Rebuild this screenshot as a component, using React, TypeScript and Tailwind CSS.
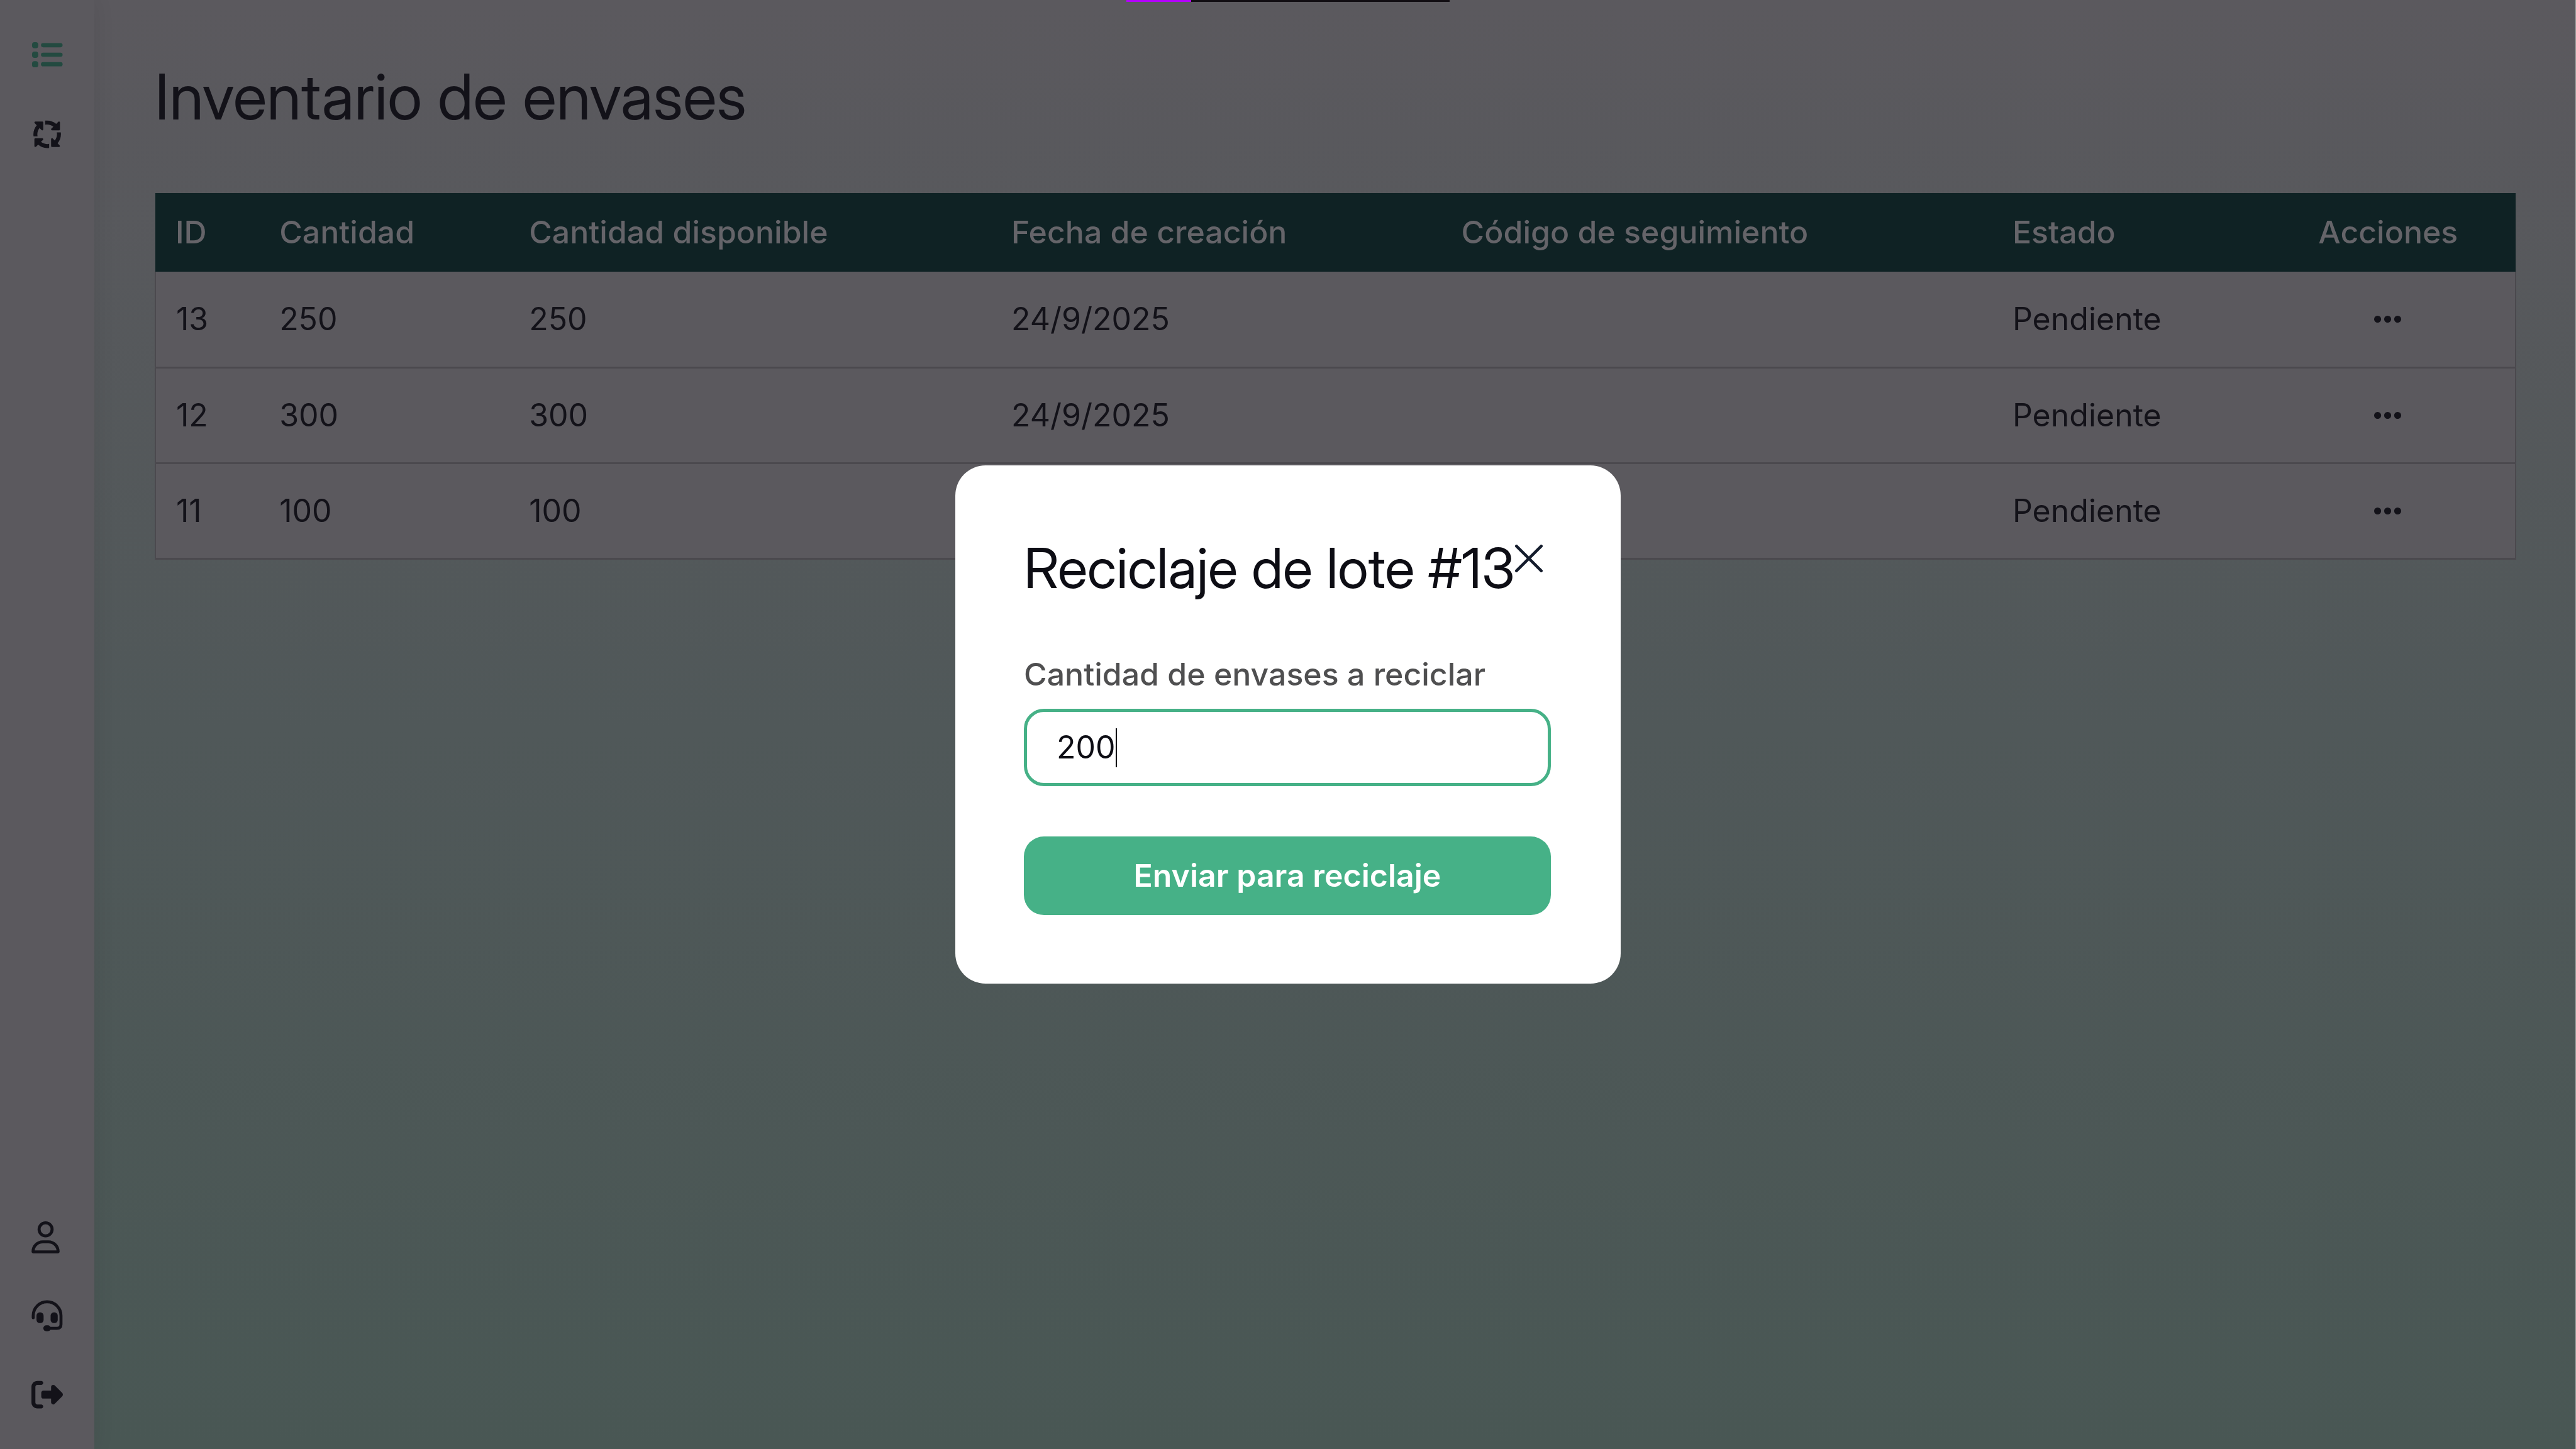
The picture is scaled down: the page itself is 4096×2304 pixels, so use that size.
import type { ReactNode } from "react";
import { FaArrowsSpin, FaEllipsis, FaRegUser, FaRightFromBracket } from "react-icons/fa6";

const rows = [
  { id: 13, cantidad: 250, disponible: 250, fecha: "24/9/2025", codigo: "", estado: "Pendiente" },
  { id: 12, cantidad: 300, disponible: 300, fecha: "24/9/2025", codigo: "", estado: "Pendiente" },
  { id: 11, cantidad: 100, disponible: 100, fecha: "24/9/2025", codigo: "", estado: "Pendiente" },
];

function ListIcon() {
  return (
    <svg viewBox="0 0 51 51" className="size-[51px]" fill="currentColor">
      {[10.5, 26, 41.5].map((y) => (
        <g key={y}>
          <rect x="1" y={y - 5} width="10" height="10" rx="4" />
          <rect x="15.5" y={y - 3.4} width="35" height="6.8" rx="3.4" />
        </g>
      ))}
    </svg>
  );
}

function HeadsetIcon() {
  return (
    <svg viewBox="0 0 53 53" className="size-[51px]" fill="none" stroke="currentColor" strokeWidth="5" strokeLinecap="round">
      <path d="M3 29.5V26A23.4 23.4 0 0 1 49.8 26V40.5Q49.8 47.3 43 47.3H27" />
      <g fill="currentColor" stroke="none">
        <rect x="8.5" y="20.5" width="12" height="18" rx="5.5" />
        <rect x="32.3" y="20.5" width="12" height="18" rx="5.5" />
        <rect x="20" y="42.2" width="12.5" height="10" rx="5" />
      </g>
    </svg>
  );
}

function NavLink({ label, active, children }: { label: string; active?: boolean; children: ReactNode }) {
  return (
    <a
      href="#"
      aria-label={label}
      className={active ? "flex h-[51px] items-center text-[#234a40]" : "flex h-[51px] items-center"}
    >
      {children}
    </a>
  );
}

function Sidebar() {
  return (
    <nav className="relative flex w-[150px] shrink-0 flex-col justify-between bg-[#5b595e] px-[50px] py-[61px] text-[#131219] shadow-[0_0_32px_rgba(0,0,0,0.08)]">
      <div className="flex flex-col gap-[76px]">
        <NavLink label="Inventario" active>
          <ListIcon />
        </NavLink>
        <NavLink label="Reciclaje">
          <FaArrowsSpin size={51} />
        </NavLink>
      </div>
      <div className="flex flex-col gap-[74px]">
        <NavLink label="Perfil">
          <FaRegUser className="h-[51px] w-[45px]" />
        </NavLink>
        <NavLink label="Soporte">
          <HeadsetIcon />
        </NavLink>
        <NavLink label="Salir">
          <FaRightFromBracket size={51} />
        </NavLink>
      </div>
    </nav>
  );
}

function Inventory() {
  return (
    <table className="w-full table-fixed border-collapse text-left">
      <colgroup>
        <col className="w-[4.4%]" />
        <col className="w-[10.58%]" />
        <col className="w-[20.43%]" />
        <col className="w-[19.07%]" />
        <col className="w-[23.35%]" />
        <col className="w-[11.37%]" />
        <col className="w-[10.8%]" />
      </colgroup>
      <thead>
        <tr className="h-[125px] bg-[#0f2224] text-[#656469]">
          <th className="px-8 font-medium">ID</th>
          <th className="px-8 font-medium">Cantidad</th>
          <th className="px-8 font-medium">Cantidad disponible</th>
          <th className="px-8 font-medium">Fecha de creación</th>
          <th className="px-8 font-medium">Código de seguimiento</th>
          <th className="px-8 font-medium">Estado</th>
          <th className="px-8 text-center font-medium">Acciones</th>
        </tr>
      </thead>
      <tbody>
        {rows.map((r) => (
          <tr key={r.id} className="h-[152px] border-x-2 border-b-3 border-[#4b494e] bg-[#5b595e]">
            <td className="px-8">{r.id}</td>
            <td className="px-8">{r.cantidad}</td>
            <td className="px-8">{r.disponible}</td>
            <td className="px-8">{r.fecha}</td>
            <td className="px-8">{r.codigo}</td>
            <td className="px-8">{r.estado}</td>
            <td className="px-8">
              <button type="button" aria-label="Acciones" className="mx-auto flex size-[51px] items-center justify-center">
                <FaEllipsis size={51} />
              </button>
            </td>
          </tr>
        ))}
      </tbody>
    </table>
  );
}

function RecycleDialog() {
  return (
    <div className="fixed inset-0 flex items-center justify-center">
      <form
        role="dialog"
        aria-labelledby="dialog-title"
        className="flex w-[1058px] flex-col rounded-[48px] bg-white py-[109px] pr-[111px] pl-[109px] text-[#0d0d14]"
      >
        <div className="flex items-start">
          <h2 id="dialog-title" className="whitespace-nowrap font-['Inter_Display','Inter',sans-serif] text-[88px] leading-[108px]">
            Reciclaje de lote #13
          </h2>
          <button type="button" aria-label="Cerrar" className="mt-[17px] flex size-[44px] items-center justify-center">
            <svg viewBox="0 0 44 44" className="size-[44px]" fill="none" stroke="#141c2c" strokeWidth="4.6" strokeLinecap="round">
              <path d="M2.3 2.3 41.7 41.7M41.7 2.3 2.3 41.7" />
            </svg>
          </button>
        </div>
        <label htmlFor="cantidad" className="mt-[77px] font-medium leading-[77px] text-[#4f4f50]">
          Cantidad de envases a reciclar
        </label>
        <div className="mt-4 flex h-[123px] items-center rounded-[32px] border-5 border-[#46b187] px-[47px]">
          <input id="cantidad" defaultValue="200" className="field-sizing-content min-w-0 outline-none" />
          <span className="h-[62px] w-[2px] bg-[#0d0d14]" />
        </div>
        <button type="submit" className="mt-20 h-[125px] rounded-[32px] bg-[#46b187] font-semibold text-white">
          Enviar para reciclaje
        </button>
      </form>
    </div>
  );
}

export default function App() {
  return (
    <div className="flex min-h-screen border-r border-[#a5a6a3] bg-[#5b595e] font-['Inter',sans-serif] text-[50px] leading-[77px] text-[#131219]">
      <Sidebar />
      <main className="flex-1 bg-linear-to-b from-[#5b595e] via-[#505859] to-[#495754] pt-[92px] pr-[94px] pl-24">
        <h1 className="mb-[92px] font-['Inter_Display','Inter',sans-serif] text-[100px] leading-[123px]">Inventario de envases</h1>
        <Inventory />
      </main>
      <div className="fixed inset-x-0 top-0 flex justify-center">
        <div className="flex h-[3px] w-[514px] bg-[#110d12]">
          <div className="w-1/5 bg-[#b400ff]" />
        </div>
      </div>
      <RecycleDialog />
    </div>
  );
}
